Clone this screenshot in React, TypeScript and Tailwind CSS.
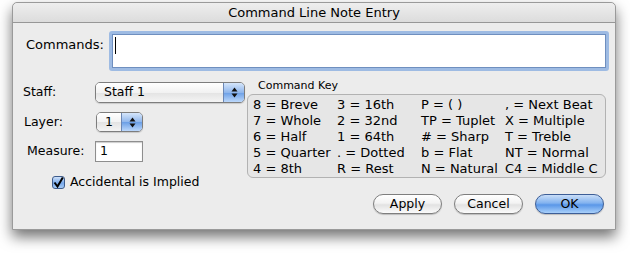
import React from 'react';

const font = "font-['DejaVu_Sans',_'Liberation_Sans',_sans-serif]";

const keyRows = [
  ['8 = Breve', '3 = 16th', 'P = ( )', ', = Next Beat'],
  ['7 = Whole', '2 = 32nd', 'TP = Tuplet', 'X = Multiple'],
  ['6 = Half', '1 = 64th', '# = Sharp', 'T = Treble'],
  ['5 = Quarter', '. = Dotted', 'b = Flat', 'NT = Normal'],
  ['4 = 8th', 'R = Rest', 'N = Natural', 'C4 = Middle C'],
];

function Arrows() {
  return (
    <svg width="7" height="11" viewBox="0 0 7 11">
      <path d="M3.5 0.5 L6.5 4.5 L0.5 4.5 Z" fill="#111" />
      <path d="M3.5 10.5 L6.5 6.5 L0.5 6.5 Z" fill="#111" />
    </svg>
  );
}

function Popup({ value, width, height }: { value: string; width: string; height: string }) {
  return (
    <div className={`${width} ${height} flex rounded-[5px] border border-[#7d7d7d] overflow-hidden shadow-[0_1px_1px_rgba(0,0,0,0.15)]`}>
      <div className="flex-1 flex items-center pl-[8px] bg-[linear-gradient(#ffffff,#f2f2f2_50%,#e3e3e3_51%,#f4f4f4)]">
        {value}
      </div>
      <div className="w-[21px] flex items-center justify-center border-l border-[#6c87b4] bg-[linear-gradient(#d6e6fb,#8fb6ec_50%,#6a9ee6_51%,#bcd8fb)]">
        <Arrows />
      </div>
    </div>
  );
}

function Button({ label, primary }: { label: string; primary?: boolean }) {
  return (
    <button
      className={`w-[69px] h-[20px] rounded-full flex items-center justify-center text-black shadow-[0_1px_1px_rgba(0,0,0,0.2)] ${
        primary
          ? 'border border-[#3d5e97] bg-[linear-gradient(#c9def8,#82b2ef_45%,#5a97e8_55%,#a9d0fa)]'
          : 'border border-[#7e7e7e] bg-[linear-gradient(#ffffff,#f3f3f3_45%,#e2e2e2_55%,#fbfbfb)]'
      }`}
    >
      {label}
    </button>
  );
}

export default function App() {
  return (
    <div className={`w-[630px] h-[253px] bg-white overflow-hidden pt-[2px] pl-[12px] text-[12.5px] text-black ${font}`}>
      <div className="w-[604px] h-[228px] rounded-t-[5px] border border-[#9a9a9a] bg-[#ececec] shadow-[0_7px_14px_rgba(0,0,0,0.55)] flex flex-col">
        {/* Title bar */}
        <div className="h-[20px] rounded-t-[5px] border-b border-[#979797] bg-[linear-gradient(#eeeeee,#dcdcdc)] flex items-center justify-center text-[13px]">
          Command Line Note Entry
        </div>

        {/* Commands */}
        <div className="flex items-start pt-[8px]">
          <div className="w-[96px] pl-[13px] pt-[4px] text-[13px]">Commands:</div>
          <div className="relative w-[500px] h-[40px] rounded-[3px] border-[3px] border-[#9ebbe3] bg-white">
            <div className="absolute inset-0 border border-[#6f8fbf]" />
            <div className="absolute left-[3px] top-[3px] w-px h-[17px] bg-black" />
          </div>
        </div>

        {/* Lower section */}
        <div className="flex mt-[8px]">
          <div className="w-[234px] pt-[3px] flex flex-col">
            <div className="flex items-center h-[21px]">
              <div className="w-[82px] pl-[10px]">Staff:</div>
              <Popup value="Staff 1" width="w-[150px]" height="h-[21px]" />
            </div>
            <div className="flex items-center h-[20px] mt-[9px]">
              <div className="w-[83px] pl-[11px]">Layer:</div>
              <Popup value="1" width="w-[47px]" height="h-[20px]" />
            </div>
            <div className="flex items-center h-[21px] mt-[9px]">
              <div className="w-[82px] pl-[14px]">Measure:</div>
              <div className="w-[48px] h-[21px] border border-[#8e8e8e] bg-white flex items-center pl-[4px] shadow-[inset_0_1px_1px_rgba(0,0,0,0.2)]">
                1
              </div>
            </div>
            <div className="flex items-center h-[13px] mt-[14px] pl-[39px]">
              <div className="w-[13px] h-[13px] rounded-[3px] border border-[#3e5c8c] bg-[linear-gradient(#cfe2fa,#77a8ea_55%,#a6cbf7)] flex items-center justify-center">
                <svg width="11" height="11" viewBox="0 0 11 11">
                  <path d="M1.5 5.5 L4.5 9.5 L9.8 0.5" stroke="#000" strokeWidth="2" fill="none" />
                </svg>
              </div>
              <span className="ml-[5px]">Accidental is Implied</span>
            </div>
          </div>

          <div className="flex flex-col">
            <div className="h-[13px] pl-[11px] text-[11px] leading-[13px]">Command Key</div>
            <div className="mt-[2px] w-[359px] h-[84px] rounded-[6px] border border-[#b2b2b2] bg-[#e6e6e6] pl-[5px] pt-[2px]">
              {keyRows.map((row, i) => (
                <div key={i} className="flex h-[16px] leading-[16px] text-[13px]">
                  {row.map((c, j) => (
                    <div key={j} className="w-[84px] shrink-0 whitespace-nowrap">
                      {c}
                    </div>
                  ))}
                </div>
              ))}
            </div>
          </div>
        </div>

        {/* Buttons */}
        <div className="flex justify-end gap-[12px] mt-[5px] pr-[11px]">
          <Button label="Apply" />
          <Button label="Cancel" />
          <Button label="OK" primary />
        </div>
      </div>
    </div>
  );
}
